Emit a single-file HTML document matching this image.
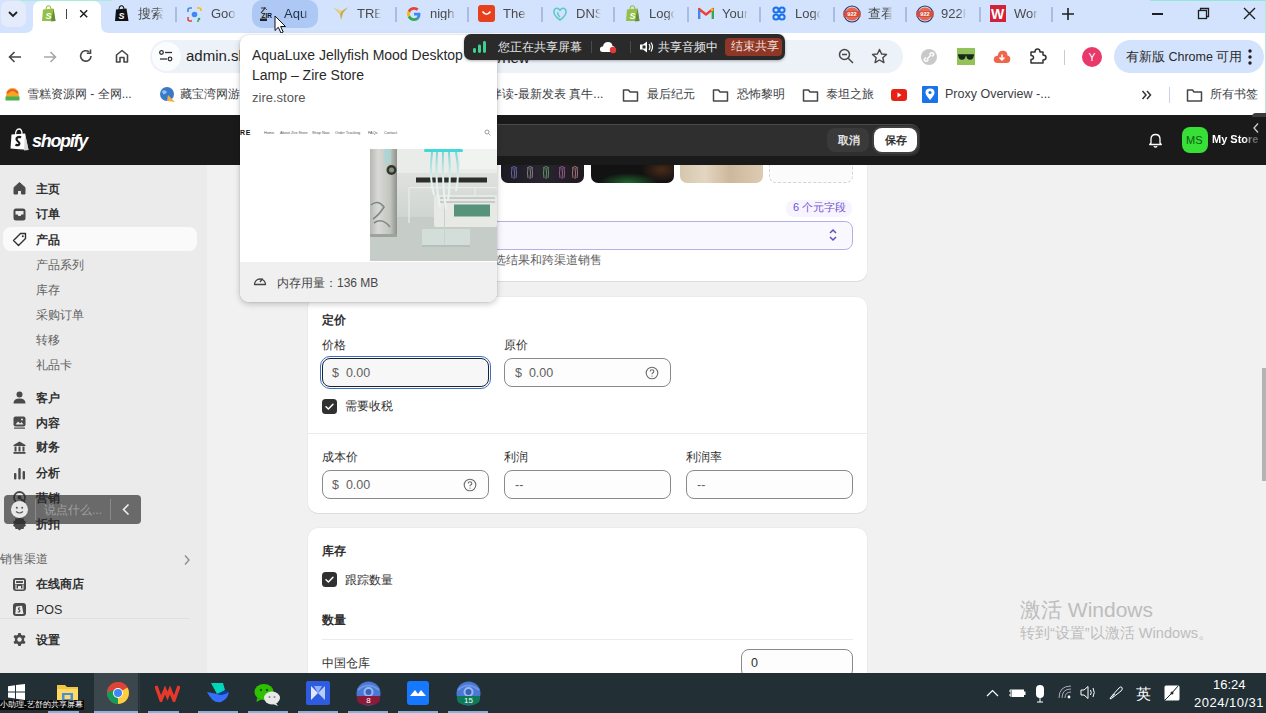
<!DOCTYPE html>
<html><head><meta charset="utf-8">
<style>
*{margin:0;padding:0;box-sizing:border-box}
html,body{width:1266px;height:713px;overflow:hidden;background:#f1f1f1;font-family:"Liberation Sans",sans-serif;position:relative}
.a{position:absolute}
.t{position:absolute;white-space:nowrap;line-height:1}
/* tab strip */
#tabs{left:0;top:0;width:1266px;height:33px;background:#d3e3fd}
#toolbar{left:0;top:33px;width:1266px;height:47px;background:#fff}
#bm{left:0;top:80px;width:1266px;height:35px;background:#fff}
#shhead{z-index:2;left:0;top:115px;width:1266px;height:50px;background:#1a1a1a}
#side{z-index:2;left:0;top:165px;width:207px;height:508px;background:#ebebeb}
#taskbar{z-index:4;left:0;top:673px;width:1266px;height:40px;background:#223036}
.tabtxt{font-size:13px;color:#4a4a4a}
.sep{width:1.5px;height:15px;background:#a9bde3;top:7px}
.card{background:#fff;border-radius:10px;box-shadow:0 1px 0 #dcdcdc, 0 0 0 0.5px #e6e6e6}
.nav{font-size:12px;font-weight:bold;color:#303030}
.sub{font-size:12px;color:#616161}
.lbl{font-size:12px;color:#303030}
.inp{border:1px solid #8a8a8a;border-radius:8px;background:#fdfdfd;height:29px}
.fade{overflow:hidden;-webkit-mask-image:linear-gradient(90deg,#000 70%,transparent);mask-image:linear-gradient(90deg,#000 70%,transparent)}
.inptxt{font-size:12.5px;color:#616161}
.bmt{font-size:12px;color:#3c4043}
</style></head><body>


<div id="tabs" class="a">
  
  <div class="a" style="left:20px;top:0;width:92px;height:1px;background:#a8ecdc"></div>
  <div class="a" style="left:1150px;top:0;width:116px;height:1px;background:#8fe8d8"></div>
  <!-- tab search -->
  <div class="a" style="left:1px;top:1px;width:25px;height:26px;border-radius:7px;background:#e4ecfb"></div>
  <svg class="a" style="left:5.5px;top:8px" width="14" height="12" viewBox="0 0 14 12"><path d="M3 4 L7 8 L11 4" stroke="#1f1f1f" stroke-width="1.8" fill="none"/></svg>
  <!-- active tab -->
  <svg class="a" style="left:25px;top:0px" width="84" height="33" viewBox="0 0 84 33"><path d="M0 33 Q8 33 8 25 L8 9 Q8 1 16 1 L68 1 Q76 1 76 9 L76 25 Q76 33 84 33 Z" fill="#fff"/></svg>
  <svg class="a" style="left:41px;top:5px" width="15" height="17" viewBox="0 0 15 17"><path d="M2 4.5 L12.5 3.5 L14.5 16 L1 16 Z" fill="#95bf47"/><path d="M12.5 3.5 L14.5 16 L10 16.5 Z" fill="#5e8e3e"/><path d="M5 5 Q5 0.8 7.5 0.8 Q10 0.8 10 5" stroke="#95bf47" stroke-width="1.1" fill="none"/><text x="4.5" y="14" font-size="9" font-weight="bold" fill="#fff" font-family="Liberation Sans" font-style="italic">S</text></svg>
  <div class="a" style="left:66px;top:9px;width:1.3px;height:10px;background:#444"></div>
  <svg class="a" style="left:79px;top:9px" width="10" height="10" viewBox="0 0 10 10"><path d="M1.2 1.2 L8.2 8.2 M8.2 1.2 L1.2 8.2" stroke="#1f1f1f" stroke-width="1.5"/></svg>
  <!-- tab 2 shopify black -->
  <svg class="a" style="left:114px;top:5px" width="15" height="17" viewBox="0 0 15 17"><path d="M2 4.5 L12.5 3.5 L14.5 16 L1 16 Z" fill="#111"/><path d="M5 5 Q5 0.8 7.5 0.8 Q10 0.8 10 5" stroke="#111" stroke-width="1.1" fill="none"/><text x="4.5" y="14" font-size="9" font-weight="bold" fill="#fff" font-family="Liberation Sans" font-style="italic">S</text></svg>
  <div class="t tabtxt fade" style="left:138px;top:7px;width:26px">搜索</div>
  <div class="a sep" style="left:175px"></div>
  <!-- google lens -->
  <svg class="a" style="left:187px;top:7px" width="15" height="15" viewBox="0 0 15 15"><path d="M1 5 V3 Q1 1 3 1 H5" stroke="#4285f4" stroke-width="1.6" fill="none"/><path d="M10 1 H12 Q14 1 14 3 V4" stroke="#fbbc04" stroke-width="1.6" fill="none"/><path d="M1 10 V12 Q1 14 3 14 H5" stroke="#ea4335" stroke-width="1.6" fill="none"/><path d="M10 14 H12" stroke="#34a853" stroke-width="1.6"/><circle cx="7.5" cy="7.5" r="2.8" fill="#4285f4"/><circle cx="12" cy="12" r="1.3" fill="#34a853"/></svg>
  <div class="t tabtxt fade" style="left:211px;top:7px;width:25px">Goo</div>
  <!-- hovered tab -->
  <div class="a" style="left:252px;top:0px;width:66px;height:28px;border-radius:10px;background:#adc8f4"></div>
  <svg class="a" style="left:259px;top:6px" width="18" height="16" viewBox="0 0 18 16"><path d="M2 2 L6 2 L2 7" stroke="#333" stroke-width="1.2" fill="none"/><path d="M5 1 L8 4" stroke="#555" stroke-width="1"/><text x="2.5" y="12" font-size="6.5" font-weight="bold" fill="#111" font-family="Liberation Sans">ZIR</text><rect x="1" y="12.5" width="7" height="2.5" fill="#222"/></svg>
  <div class="t tabtxt fade" style="left:284px;top:7px;width:27px;color:#23324a">Aqu</div>
  <svg class="a" style="left:274px;top:15px" width="13" height="19" viewBox="0 0 13 19"><path d="M1 1 L1 15.5 L4.3 12.3 L7 18 L9.2 17 L6.6 11.5 L11.5 11.5 Z" fill="#fff" stroke="#111" stroke-width="1"/></svg>
  <!-- TREI -->
  <svg class="a" style="left:333px;top:6px" width="16" height="15" viewBox="0 0 16 15"><path d="M1 2 L7 8 L8 14 L10 7 L15 1 L9 5 L7 6 Z" fill="#c8a84a"/><path d="M1 2 L7 8 L9 5" fill="#e8d27a"/></svg>
  <div class="t tabtxt fade" style="left:357px;top:7px;width:24px">TREI</div>
  <div class="a sep" style="left:395px"></div>
  <!-- G -->
  <svg class="a" style="left:407px;top:7px" width="14" height="14" viewBox="0 0 48 48"><path fill="#EA4335" d="M24 9.5c3.5 0 6.6 1.2 9.1 3.6l6.8-6.8C35.8 2.4 30.3 0 24 0 14.6 0 6.6 5.4 2.6 13.3l7.9 6.1C12.4 13.6 17.7 9.5 24 9.5z"/><path fill="#4285F4" d="M46.1 24.5c0-1.6-.1-3.1-.4-4.5H24v9h12.4c-.5 2.9-2.2 5.3-4.6 6.9l7.6 5.9c4.4-4.1 6.7-10.1 6.7-17.3z"/><path fill="#FBBC05" d="M10.5 28.6c-.5-1.4-.8-3-.8-4.6s.3-3.2.8-4.6l-7.9-6.1C.9 16.6 0 20.2 0 24s.9 7.4 2.6 10.7l7.9-6.1z"/><path fill="#34A853" d="M24 48c6.5 0 11.9-2.1 15.9-5.8l-7.6-5.9c-2.1 1.4-4.9 2.3-8.3 2.3-6.3 0-11.6-4.2-13.5-9.9l-7.9 6.1C6.6 42.6 14.6 48 24 48z"/></svg>
  <div class="t tabtxt fade" style="left:430px;top:7px;width:26px">nigh</div>
  <div class="a sep" style="left:467px"></div>
  <!-- red -->
  <div class="a" style="left:478px;top:5px;width:17px;height:17px;border-radius:3px;background:#e8401c"></div>
  <svg class="a" style="left:478px;top:5px" width="17" height="17" viewBox="0 0 17 17"><path d="M4.5 6.5 Q8.5 12 12.5 6.5" stroke="#fff" stroke-width="1.5" fill="none"/></svg>
  <div class="t tabtxt fade" style="left:503px;top:7px;width:24px">The</div>
  <div class="a sep" style="left:541px"></div>
  <!-- DNS -->
  <svg class="a" style="left:552px;top:6px" width="16" height="16" viewBox="0 0 16 16"><path d="M8 14 Q1 9 2 5 Q3 1.5 6 2.5 Q8 3.5 8 5 Q8 3.5 10 2.5 Q13 1.5 14 5 Q15 9 8 14 Z" stroke="#5cc8c8" stroke-width="1.6" fill="none"/><path d="M8 11 Q5 8 6 6" stroke="#5cc8c8" stroke-width="1.4" fill="none"/></svg>
  <div class="t tabtxt fade" style="left:576px;top:7px;width:25px">DNS</div>
  <div class="a sep" style="left:613px"></div>
  <!-- shopify green -->
  <svg class="a" style="left:625px;top:5px" width="15" height="17" viewBox="0 0 15 17"><path d="M2 4.5 L12.5 3.5 L14.5 16 L1 16 Z" fill="#95bf47"/><path d="M12.5 3.5 L14.5 16 L10 16.5 Z" fill="#5e8e3e"/><path d="M5 5 Q5 0.8 7.5 0.8 Q10 0.8 10 5" stroke="#95bf47" stroke-width="1.1" fill="none"/><text x="4.5" y="14" font-size="9" font-weight="bold" fill="#fff" font-family="Liberation Sans" font-style="italic">S</text></svg>
  <div class="t tabtxt fade" style="left:649px;top:7px;width:26px">Logo</div>
  <div class="a sep" style="left:687px"></div>
  <!-- gmail -->
  <svg class="a" style="left:698px;top:7px" width="16" height="13" viewBox="0 0 16 13"><path d="M1 12 V2 L8 7.5 L15 2 V12" stroke="#ea4335" stroke-width="2.4" fill="none" stroke-linejoin="round"/><path d="M1 12 V3" stroke="#4285f4" stroke-width="2.4"/><path d="M15 12 V3" stroke="#34a853" stroke-width="2.4"/><path d="M13 3.5 L15 2" stroke="#fbbc04" stroke-width="2.4"/></svg>
  <div class="t tabtxt fade" style="left:722px;top:7px;width:26px">Your</div>
  <div class="a sep" style="left:759px"></div>
  <!-- blue logo -->
  <svg class="a" style="left:772px;top:6px" width="14" height="15" viewBox="0 0 14 15"><circle cx="4" cy="4" r="2.6" stroke="#1a73e8" stroke-width="2" fill="none"/><circle cx="10" cy="4" r="2.6" stroke="#1a73e8" stroke-width="2" fill="none"/><circle cx="4" cy="11" r="2.6" stroke="#1a73e8" stroke-width="2" fill="none"/><circle cx="10" cy="11" r="2.6" stroke="#1a73e8" stroke-width="2" fill="none"/></svg>
  <div class="t tabtxt fade" style="left:795px;top:7px;width:26px">Logo</div>
  <div class="a sep" style="left:833px"></div>
  <!-- 922 -->
  <svg class="a" style="left:843px;top:5px" width="18" height="18" viewBox="0 0 18 18"><circle cx="9" cy="9" r="8.6" fill="#27336a"/><circle cx="9" cy="9" r="7.4" fill="#d8d8e8"/><circle cx="9" cy="9" r="6.6" fill="#e2684f"/><rect x="0.5" y="6" width="17" height="6" fill="#d84c3c"/><text x="9" y="11" font-size="5.6" font-weight="bold" fill="#fff" text-anchor="middle" font-family="Liberation Sans">922</text></svg>
  <div class="t tabtxt fade" style="left:868px;top:7px;width:25px">查看</div>
  <div class="a sep" style="left:905px"></div>
  <svg class="a" style="left:916px;top:5px" width="18" height="18" viewBox="0 0 18 18"><circle cx="9" cy="9" r="8.6" fill="#27336a"/><circle cx="9" cy="9" r="7.4" fill="#d8d8e8"/><circle cx="9" cy="9" r="6.6" fill="#e2684f"/><rect x="0.5" y="6" width="17" height="6" fill="#d84c3c"/><text x="9" y="11" font-size="5.6" font-weight="bold" fill="#fff" text-anchor="middle" font-family="Liberation Sans">922</text></svg>
  <div class="t tabtxt fade" style="left:941px;top:7px;width:25px">922F</div>
  <div class="a sep" style="left:979px"></div>
  <div class="a" style="left:990px;top:5px;width:16px;height:17px;background:#d4213a"></div>
  <div class="t" style="left:991px;top:7px;font-size:14px;font-weight:bold;color:#fff">W</div>
  <div class="t tabtxt fade" style="left:1014px;top:7px;width:24px">Wor</div>
  <div class="a sep" style="left:1051px"></div>
  <svg class="a" style="left:1061px;top:7px" width="14" height="14" viewBox="0 0 14 14"><path d="M7 1 V13 M1 7 H13" stroke="#1f1f1f" stroke-width="1.6"/></svg>
  <!-- window controls -->
  <div class="a" style="left:1152px;top:13px;width:11px;height:1.5px;background:#1f1f1f"></div>
  <svg class="a" style="left:1197px;top:7px" width="13" height="13" viewBox="0 0 13 13"><rect x="1.5" y="3.5" width="8" height="8" stroke="#1f1f1f" stroke-width="1.3" fill="none"/><path d="M3.5 3.5 V1.5 H11.5 V9.5 H9.5" stroke="#1f1f1f" stroke-width="1.3" fill="none"/></svg>
  <svg class="a" style="left:1243px;top:7px" width="13" height="13" viewBox="0 0 13 13"><path d="M1 1 L12 12 M12 1 L1 12" stroke="#1f1f1f" stroke-width="1.4"/></svg>
</div>


<div id="toolbar" class="a">
  <svg class="a" style="left:7px;top:16px" width="16" height="16" viewBox="0 0 16 16"><path d="M14 8 H2.5 M7.5 3 L2.5 8 L7.5 13" stroke="#474747" stroke-width="1.6" fill="none"/></svg>
  <svg class="a" style="left:42px;top:16px" width="16" height="16" viewBox="0 0 16 16"><path d="M2 8 H13.5 M8.5 3 L13.5 8 L8.5 13" stroke="#a8a8a8" stroke-width="1.6" fill="none"/></svg>
  <svg class="a" style="left:78px;top:15px" width="16" height="16" viewBox="0 0 16 16"><path d="M13 8 A5.2 5.2 0 1 1 11.2 4" stroke="#474747" stroke-width="1.6" fill="none"/><path d="M12.5 1.5 V5.2 H8.8" stroke="#474747" stroke-width="1.6" fill="none"/></svg>
  <svg class="a" style="left:114px;top:15px" width="16" height="16" viewBox="0 0 16 16"><path d="M2.5 14 V7 L8 2.5 L13.5 7 V14 H10 V9.5 H6 V14 Z" stroke="#474747" stroke-width="1.6" fill="none" stroke-linejoin="round"/></svg>
  <!-- omnibox -->
  <div class="a" style="left:150px;top:7px;width:753px;height:33px;border-radius:17px;background:#edf1f8"></div>
  <div class="a" style="left:152px;top:9px;width:29px;height:29px;border-radius:15px;background:#fbfcfe"></div>
  <svg class="a" style="left:158px;top:16px" width="16" height="14" viewBox="0 0 16 14"><circle cx="3.5" cy="3.5" r="1.8" stroke="#333" stroke-width="1.3" fill="none"/><path d="M7 3.5 H14" stroke="#333" stroke-width="1.3"/><circle cx="12" cy="10" r="1.8" stroke="#333" stroke-width="1.3" fill="none"/><path d="M2 10 H9" stroke="#333" stroke-width="1.3"/></svg>
  <div class="t" style="left:186px;top:15px;font-size:15px;color:#1f1f1f">admin.sh</div>
  <div class="t" style="left:498px;top:16.5px;font-size:15px;color:#1f1f1f">/new</div>
  <svg class="a" style="left:838px;top:15px" width="17" height="17" viewBox="0 0 17 17"><circle cx="6.5" cy="6.5" r="5" stroke="#474747" stroke-width="1.5" fill="none"/><path d="M10.2 10.2 L15 15 M4 6.5 H9" stroke="#474747" stroke-width="1.5"/></svg>
  <svg class="a" style="left:871px;top:15px" width="17" height="17" viewBox="0 0 17 17"><path d="M8.5 1.5 L10.6 6 L15.5 6.4 L11.8 9.7 L12.9 14.6 L8.5 12 L4.1 14.6 L5.2 9.7 L1.5 6.4 L6.4 6 Z" stroke="#474747" stroke-width="1.4" fill="none" stroke-linejoin="round"/></svg>
  <!-- extensions -->
  <div class="a" style="left:921px;top:16px;width:16px;height:16px;border-radius:8px;background:#c9c9c9"></div>
  <svg class="a" style="left:921px;top:16px" width="16" height="16" viewBox="0 0 16 16"><path d="M6 10 L10 6 M5 8.5 L3.8 9.7 Q2.5 11.5 4.3 12 Q5.5 12.8 6.8 11.2 L7.5 10.5 M11 7.5 L12.2 6.3 Q13.5 4.5 11.7 4 Q10.5 3.2 9.2 4.8 L8.5 5.5" stroke="#fff" stroke-width="1.5" fill="none"/></svg>
  <div class="a" style="left:957px;top:15px;width:18px;height:17px;background:#93c25a"></div>
  <svg class="a" style="left:957px;top:15px" width="18" height="17" viewBox="0 0 18 17"><path d="M1 7 H17 M2 7 Q2 11 5 11 Q8 11 8 7 M10 7 Q10 11 13 11 Q16 11 16 7" stroke="#1a2a1a" stroke-width="1.5" fill="#1a2a1a"/></svg>
  <svg class="a" style="left:993px;top:16px" width="18" height="15" viewBox="0 0 18 15"><path d="M4.5 14 Q0.5 14 0.8 10 Q1.2 6.5 4.5 7 Q5.5 1.5 10 1.8 Q14.5 2 14.5 6.5 Q17.5 7 17.3 10.5 Q17 14 13.5 14 Z" fill="#f0664a"/><path d="M9 5.5 V11 M6.5 8.5 L9 11 L11.5 8.5" stroke="#fff" stroke-width="1.5" fill="none"/></svg>
  <svg class="a" style="left:1029px;top:14px" width="18" height="18" viewBox="0 0 18 18"><path d="M2 5 H6 Q6 2 8.5 2 Q11 2 11 5 H14 V8 Q17 8 17 10.5 Q17 13 14 13 V16 H2 V12.5 Q4.5 12.5 4.5 10.5 Q4.5 8.5 2 8.5 Z" stroke="#333" stroke-width="1.5" fill="none" stroke-linejoin="round"/></svg>
  <div class="a" style="left:1064px;top:17px;width:1px;height:15px;background:#c8ccd2"></div>
  <div class="a" style="left:1082px;top:14px;width:20px;height:20px;border-radius:10px;background:#e8396a"></div>
  <div class="t" style="left:1088.5px;top:19px;font-size:10.5px;color:#fff">Y</div>
  <div class="a" style="left:1114px;top:7px;width:150px;height:33px;border-radius:17px;background:#d3e3fd"></div>
  <div class="t" style="left:1126px;top:17.5px;font-size:12.5px;color:#2a2a2a">有新版 Chrome 可用</div>
  <svg class="a" style="left:1247px;top:15px" width="6" height="18" viewBox="0 0 6 18"><circle cx="3" cy="3" r="1.7" fill="#1f1f1f"/><circle cx="3" cy="9" r="1.7" fill="#1f1f1f"/><circle cx="3" cy="15" r="1.7" fill="#1f1f1f"/></svg>
</div>


<div id="bm" class="a">
  <svg class="a" style="left:5px;top:7px" width="15" height="14" viewBox="0 0 15 14"><path d="M1 10 Q1 1 7.5 1 Q14 1 14 10 Z" fill="#f5a623"/><path d="M2 6 Q7.5 0 13 6" stroke="#e95b2c" stroke-width="2" fill="none"/><rect x="0.5" y="9.5" width="14" height="4" fill="#4caf50"/></svg>
  <div class="t bmt" style="left:27px;top:8px">雪糕资源网 - 全网...</div>
  <svg class="a" style="left:159px;top:6px" width="17" height="17" viewBox="0 0 17 17"><circle cx="8" cy="8" r="7" fill="#3a78c8"/><path d="M3 5 Q6 3 8 6 Q6 9 4 8" fill="#8fc3f0"/><path d="M9 9 L16 16 L8 15 Z" fill="#f0b040"/></svg>
  <div class="t bmt" style="left:180px;top:8px">藏宝湾网游...</div>
  <div class="t bmt" style="left:490px;top:8px">伴读-最新发表 真牛...</div>
  <svg class="a" style="left:622px;top:8px" width="17" height="15" viewBox="0 0 17 15"><path d="M1.5 2 H6.5 L8 4 H15.5 V13 H1.5 Z" stroke="#474747" stroke-width="1.5" fill="none" stroke-linejoin="round"/></svg>
  <div class="t bmt" style="left:647px;top:8px">最后纪元</div>
  <svg class="a" style="left:712px;top:8px" width="17" height="15" viewBox="0 0 17 15"><path d="M1.5 2 H6.5 L8 4 H15.5 V13 H1.5 Z" stroke="#474747" stroke-width="1.5" fill="none" stroke-linejoin="round"/></svg>
  <div class="t bmt" style="left:737px;top:8px">恐怖黎明</div>
  <svg class="a" style="left:802px;top:8px" width="17" height="15" viewBox="0 0 17 15"><path d="M1.5 2 H6.5 L8 4 H15.5 V13 H1.5 Z" stroke="#474747" stroke-width="1.5" fill="none" stroke-linejoin="round"/></svg>
  <div class="t bmt" style="left:826px;top:8px">泰坦之旅</div>
  <div class="a" style="left:891px;top:9px;width:16px;height:12px;border-radius:3px;background:#e62117"></div>
  <svg class="a" style="left:891px;top:9px" width="16" height="12" viewBox="0 0 16 12"><path d="M6.5 3.5 L10.5 6 L6.5 8.5 Z" fill="#fff"/></svg>
  <div class="a" style="left:922px;top:6px;width:16px;height:17px;background:#1a73e8;border-radius:1px"></div>
  <svg class="a" style="left:922px;top:6px" width="16" height="17" viewBox="0 0 16 17"><path d="M8 14 Q3.5 9 3.5 6.5 Q3.5 2.5 8 2.5 Q12.5 2.5 12.5 6.5 Q12.5 9 8 14 Z" fill="#fff"/><circle cx="8" cy="6.5" r="1.6" fill="#1a73e8"/></svg>
  <div class="t bmt" style="left:945px;top:8px;font-size:12.5px">Proxy Overview -...</div>
  <svg class="a" style="left:1141px;top:9px" width="11" height="12" viewBox="0 0 11 12"><path d="M1.5 2 L5 6 L1.5 10 M6 2 L9.5 6 L6 10" stroke="#333" stroke-width="1.5" fill="none"/></svg>
  <div class="a" style="left:1169px;top:7px;width:1px;height:16px;background:#c8d4e8"></div>
  <svg class="a" style="left:1186px;top:8px" width="17" height="15" viewBox="0 0 17 15"><path d="M1.5 2 H6.5 L8 4 H15.5 V13 H1.5 Z" stroke="#474747" stroke-width="1.5" fill="none" stroke-linejoin="round"/></svg>
  <div class="t bmt" style="left:1210px;top:8px">所有书签</div>
</div>


<div id="shhead" class="a">
  <svg class="a" style="left:10px;top:13px" width="20" height="23" viewBox="0 0 20 23"><path d="M1.5 6.5 L15 5.5 L18.5 22 L0.5 20.5 Z" fill="#fff"/><path d="M15 5.5 L18.5 22 L14 22.5 Z" fill="#d8d8d8"/><path d="M5.5 7 Q5.5 1 9 1 Q12 1 12 6" stroke="#fff" stroke-width="1.3" fill="none"/><path d="M11 9.5 Q9.5 8.5 7.8 9.2 Q6 10 6.8 12 Q7.8 13.5 9 14.5 Q10 16 8.5 17 Q7.2 17.6 5.5 16.5" stroke="#1a1a1a" stroke-width="2.2" fill="none"/></svg>
  <div class="t" style="left:32px;top:16.5px;font-size:18px;font-weight:bold;font-style:italic;color:#fff;letter-spacing:-1.3px">shopify</div>
  <!-- contextual save bar -->
  <div class="a" style="left:480px;top:9px;width:440px;height:32px;border-radius:9px;background:#2f2f2f;border-top:1px solid #4a4a4a"></div>
  <div class="a" style="left:827px;top:13px;width:42px;height:24px;border-radius:8px;background:#3a3a3a"></div>
  <div class="t" style="left:837.5px;top:19.5px;font-size:11px;font-weight:bold;color:#e3e3e3">取消</div>
  <div class="a" style="left:874px;top:13px;width:43px;height:24px;border-radius:8px;background:#fff;box-shadow:0 0 0 2px #3f3f3f"></div>
  <div class="t" style="left:884.5px;top:19.5px;font-size:11px;font-weight:bold;color:#303030">保存</div>
  <svg class="a" style="left:1148px;top:17px" width="15" height="16" viewBox="0 0 15 16"><path d="M3 11 V7 Q3 2.5 7.5 2.5 Q12 2.5 12 7 V11 L13.3 12.5 H1.7 Z" stroke="#fff" stroke-width="1.3" fill="none" stroke-linejoin="round"/><path d="M5.8 14.3 Q7.5 15.8 9.2 14.3" stroke="#fff" stroke-width="1.3" fill="none"/></svg>
  <div class="a" style="left:1182px;top:12px;width:26px;height:26px;border-radius:8px;background:#36e036"></div>
  <div class="t" style="left:1186px;top:20px;font-size:11px;color:#0f5a10">MS</div>
  <div class="t" style="left:1212px;top:19px;font-size:11px;font-weight:bold;color:#fff;-webkit-mask-image:linear-gradient(90deg,#000 72%,rgba(0,0,0,0.35) 85%)">My Store</div>
  <svg class="a" style="left:1252px;top:7px" width="8" height="12" viewBox="0 0 8 12"><path d="M6 1.5 L2 6 L6 10.5" stroke="#cfcfcf" stroke-width="1.3" fill="none"/></svg>
</div>

<div id="side" class="a">
<div class="a" style="left:3px;top:62px;width:194px;height:24px;border-radius:8px;background:#fafafa"></div>
<svg class="a" style="left:12px;top:16px" width="15" height="15" viewBox="0 0 15 15"><path d="M2 13 V6.5 L7.5 1.5 L13 6.5 V13 H9.5 V9.5 H5.5 V13 Z" fill="#4a4a4a" stroke="#4a4a4a" stroke-width="1" stroke-linejoin="round"/></svg><div class="t nav" style="left:36px;top:17.5px">主页</div>
<svg class="a" style="left:12px;top:41.5px" width="15" height="15" viewBox="0 0 15 15"><rect x="1.5" y="1.5" width="12" height="12" rx="2.5" fill="#4a4a4a"/><path d="M3.5 4 H11.5 V7.5 H9.5 L8.5 9 H6.5 L5.5 7.5 H3.5 Z" fill="#ebebeb"/></svg><div class="t nav" style="left:36px;top:43px">订单</div>
<svg class="a" style="left:12px;top:67px" width="15" height="15" viewBox="0 0 15 15"><path d="M8.5 1.5 H13.5 V6.5 L6.5 13.5 L1.5 8.5 Z" stroke="#303030" stroke-width="1.4" fill="none" stroke-linejoin="round"/><circle cx="10.8" cy="4.2" r="1" fill="#303030"/></svg><div class="t nav" style="left:36px;top:68.5px">产品</div>
<svg class="a" style="left:12px;top:225px" width="15" height="15" viewBox="0 0 15 15"><circle cx="7.5" cy="4.5" r="3" fill="#4a4a4a"/><path d="M1.5 13.5 Q1.5 8.5 7.5 8.5 Q13.5 8.5 13.5 13.5 Z" fill="#4a4a4a"/></svg><div class="t nav" style="left:36px;top:226.5px">客户</div>
<svg class="a" style="left:12px;top:250.1px" width="15" height="15" viewBox="0 0 15 15"><rect x="1.5" y="1.5" width="12" height="10" rx="2" fill="#4a4a4a"/><path d="M3.5 9.5 L6 6.5 L8 8.5 L9.5 7 L11.5 9.5 Z" fill="#ebebeb"/><circle cx="10" cy="4.5" r="1" fill="#ebebeb"/><rect x="2" y="12.5" width="11" height="1.2" fill="#4a4a4a"/></svg><div class="t nav" style="left:36px;top:251.6px">内容</div>
<svg class="a" style="left:12px;top:274.8px" width="15" height="15" viewBox="0 0 15 15"><path d="M1.5 5 L7.5 1.5 L13.5 5 V6 H1.5 Z" fill="#4a4a4a"/><rect x="2.5" y="6.5" width="2" height="5" fill="#4a4a4a"/><rect x="6.5" y="6.5" width="2" height="5" fill="#4a4a4a"/><rect x="10.5" y="6.5" width="2" height="5" fill="#4a4a4a"/><rect x="1.5" y="12" width="12" height="1.8" fill="#4a4a4a"/></svg><div class="t nav" style="left:36px;top:276.3px">财务</div>
<svg class="a" style="left:12px;top:300.5px" width="15" height="15" viewBox="0 0 15 15"><rect x="2" y="7" width="2.4" height="6.5" rx="1" fill="#4a4a4a"/><rect x="6.3" y="2" width="2.4" height="11.5" rx="1" fill="#4a4a4a"/><rect x="10.6" y="5" width="2.4" height="8.5" rx="1" fill="#4a4a4a"/></svg><div class="t nav" style="left:36px;top:302px">分析</div>
<svg class="a" style="left:12px;top:325.3px" width="15" height="15" viewBox="0 0 15 15"><circle cx="7.5" cy="7.5" r="5.5" stroke="#4a4a4a" stroke-width="1.8" fill="none"/><circle cx="7.5" cy="7.5" r="2" fill="#4a4a4a"/><path d="M9 9 L13 13" stroke="#4a4a4a" stroke-width="2"/></svg><div class="t nav" style="left:36px;top:326.8px">营销</div>
<svg class="a" style="left:12px;top:351.2px" width="15" height="15" viewBox="0 0 15 15"><path d="M7.5 1 L9.2 2.5 L11.5 2.3 L12 4.5 L14 5.8 L13 7.8 L14 9.8 L12 11 L11.5 13 L9.2 13 L7.5 14.5 L5.8 13 L3.5 13 L3 11 L1 9.8 L2 7.8 L1 5.8 L3 4.5 L3.5 2.3 L5.8 2.5 Z" fill="#4a4a4a"/></svg><div class="t nav" style="left:36px;top:352.7px">折扣</div>
<div class="t sub" style="left:36px;top:93.5px">产品系列</div>
<div class="t sub" style="left:36px;top:118.5px">库存</div>
<div class="t sub" style="left:36px;top:143.5px">采购订单</div>
<div class="t sub" style="left:36px;top:168.8px">转移</div>
<div class="t sub" style="left:36px;top:194px">礼品卡</div>
<div class="t sub" style="left:0px;top:388px">销售渠道</div>
<svg class="a" style="left:183px;top:389px" width="8" height="12" viewBox="0 0 8 12"><path d="M2 1.5 L6 6 L2 10.5" stroke="#8a8a8a" stroke-width="1.3" fill="none"/></svg>
<svg class="a" style="left:12px;top:411.5px" width="15" height="15" viewBox="0 0 15 15"><rect x="1" y="1" width="13" height="13" rx="3" fill="#4a4a4a"/><rect x="3.5" y="3.5" width="8" height="3" fill="none" stroke="#ebebeb" stroke-width="1.1"/><path d="M4 7.5 V12 H11 V7.5" stroke="#ebebeb" stroke-width="1.1" fill="none"/><rect x="6" y="9" width="3" height="3" fill="#ebebeb"/></svg><div class="t nav" style="left:36px;top:413px">在线商店</div>
<svg class="a" style="left:12px;top:437px" width="15" height="15" viewBox="0 0 15 15"><rect x="1" y="1" width="13" height="13" rx="3" fill="#4a4a4a"/><path d="M4 4.5 L10 3.8 L11.5 12 L3.3 12 Z" fill="#ebebeb"/><path d="M8.2 6 Q7 5.5 6.5 6.5 Q6.3 7.5 7.5 8 Q8.3 8.8 7.3 9.8 Q6.5 10.2 5.8 9.6" stroke="#4a4a4a" stroke-width="1.1" fill="none"/></svg><div class="t nav" style="left:36px;top:439px;font-weight:normal;font-size:12.5px">POS</div>
<svg class="a" style="left:12px;top:467px" width="15" height="15" viewBox="0 0 15 15"><path d="M6.3 1 H8.7 L9.1 2.8 L10.6 3.6 L12.3 2.9 L13.5 5 L12.1 6.3 V8.7 L13.5 10 L12.3 12.1 L10.6 11.4 L9.1 12.2 L8.7 14 H6.3 L5.9 12.2 L4.4 11.4 L2.7 12.1 L1.5 10 L2.9 8.7 V6.3 L1.5 5 L2.7 2.9 L4.4 3.6 L5.9 2.8 Z" fill="#4a4a4a"/><circle cx="7.5" cy="7.5" r="2.2" fill="#ebebeb"/></svg><div class="t nav" style="left:36px;top:468.5px">设置</div>
<div class="a" style="left:0px;top:453px;width:190px;height:1px;background:#e0e0e0"></div>
</div>


<!-- cards -->
<div class="a card" style="left:308px;top:150px;width:559px;height:131px"></div>
<div class="a" style="left:501px;top:150px;width:83px;height:33px;border-radius:7px;background:linear-gradient(90deg,#1c1a22,#2a2430 50%,#1e1a20)"></div>
<svg class="a" style="left:501px;top:165px" width="83" height="18" viewBox="0 0 83 18"><path d="M10 3 Q13 0 16 3 M11 3 Q10 8 11 13 M13 3 Q14 8 13 14 M15 3 Q16 8 15 13" stroke="#8d8ae0" stroke-width="0.8" fill="none" opacity="0.85"/><path d="M26 3 Q29 0 32 3 M27 3 Q26 8 27 13 M29 3 Q30 8 29 14 M31 3 Q32 8 31 13" stroke="#b0b0b0" stroke-width="0.8" fill="none" opacity="0.85"/><path d="M42 3 Q45 0 48 3 M43 3 Q42 8 43 13 M45 3 Q46 8 45 14 M47 3 Q48 8 47 13" stroke="#6fd07a" stroke-width="0.8" fill="none" opacity="0.85"/><path d="M58 3 Q61 0 64 3 M59 3 Q58 8 59 13 M61 3 Q62 8 61 14 M63 3 Q64 8 63 13" stroke="#d07ab8" stroke-width="0.8" fill="none" opacity="0.85"/><path d="M71 3 Q74 0 77 3 M72 3 Q71 8 72 13 M74 3 Q75 8 74 14 M76 3 Q77 8 76 13" stroke="#e0a0a0" stroke-width="0.8" fill="none" opacity="0.85"/></svg>
<div class="a" style="left:591px;top:150px;width:83px;height:33px;border-radius:7px;background:radial-gradient(ellipse 30px 10px at 45% 100%,#1f6a30 0,rgba(20,20,20,0) 100%),radial-gradient(ellipse 20px 12px at 85% 60%,#4a2a18 0,rgba(20,20,20,0) 100%),#121212"></div>
<div class="a" style="left:680px;top:150px;width:83px;height:33px;border-radius:7px;background:linear-gradient(90deg,#d6c6ac,#e3d6c2 30%,#cdb89c 60%,#dccbb3)"></div>
<div class="a" style="left:769px;top:150px;width:84px;height:33px;border-radius:7px;border:1px dashed #d4d4d4;background:#fbfbfb"></div>
<div class="a" style="left:786px;top:200px;width:66px;height:17px;border-radius:8px;background:#f7f4ff"></div>
<div class="t" style="left:793px;top:202px;font-size:11px;color:#6c54d0">6 个元字段</div>
<div class="a" style="left:420px;top:221px;width:433px;height:29px;border-radius:8px;border:1px solid #b6aee6;background:#f9f8ff"></div>
<svg class="a" style="left:827px;top:227px" width="12" height="16" viewBox="0 0 12 16"><path d="M3 6 L6 3 L9 6 M3 10 L6 13 L9 10" stroke="#5b4fc2" stroke-width="1.5" fill="none"/></svg>
<div class="t" style="left:458px;top:254px;font-size:12px;color:#616161">商店筛选结果和跨渠道销售</div>

<div class="a card" style="left:308px;top:297px;width:559px;height:216px"></div>
<div class="t" style="left:322px;top:314px;font-size:12px;font-weight:bold;color:#303030">定价</div>
<div class="t lbl" style="left:322px;top:339px">价格</div>
<div class="t lbl" style="left:504px;top:339px">原价</div>
<div class="a" style="left:320px;top:356px;width:171px;height:33px;border-radius:10px;border:1px solid #3a6fc4"></div>
<div class="a" style="left:322px;top:358px;width:167px;height:29px;border-radius:8px;border:1.5px solid #1d2233;background:#f7f7f7"></div>
<div class="t inptxt" style="left:332px;top:367px">$&nbsp; 0.00</div>
<div class="a inp" style="left:504px;top:358px;width:167px;height:29px"></div>
<div class="t inptxt" style="left:515px;top:367px">$&nbsp; 0.00</div>
<svg class="a" style="left:645px;top:365.5px" width="14" height="14" viewBox="0 0 14 14"><circle cx="7" cy="7" r="5.8" stroke="#6b6b6b" stroke-width="1.1" fill="none"/><path d="M5.2 5.6 Q5.2 3.8 7 3.8 Q8.8 3.8 8.8 5.4 Q8.8 6.4 7.6 7 Q7 7.3 7 8.3" stroke="#6b6b6b" stroke-width="1.1" fill="none"/><circle cx="7" cy="10.1" r="0.7" fill="#6b6b6b"/></svg>
<div class="a" style="left:322px;top:399px;width:15px;height:15px;border-radius:3.5px;background:#303030"></div><svg class="a" style="left:322px;top:399px" width="15" height="15" viewBox="0 0 15 15"><path d="M4 7.8 L6.4 10 L11 5.2" stroke="#fff" stroke-width="1.5" fill="none" stroke-linecap="round" stroke-linejoin="round"/></svg>
<div class="t lbl" style="left:345px;top:400px">需要收税</div>
<div class="a" style="left:308px;top:433px;width:559px;height:1px;background:#ebebeb"></div>
<div class="t lbl" style="left:322px;top:451px">成本价</div>
<div class="t lbl" style="left:504px;top:451px">利润</div>
<div class="t lbl" style="left:686px;top:451px">利润率</div>
<div class="a inp" style="left:322px;top:470px;width:167px;height:29px"></div>
<div class="t inptxt" style="left:332px;top:479px">$&nbsp; 0.00</div>
<svg class="a" style="left:462.5px;top:477.5px" width="14" height="14" viewBox="0 0 14 14"><circle cx="7" cy="7" r="5.8" stroke="#6b6b6b" stroke-width="1.1" fill="none"/><path d="M5.2 5.6 Q5.2 3.8 7 3.8 Q8.8 3.8 8.8 5.4 Q8.8 6.4 7.6 7 Q7 7.3 7 8.3" stroke="#6b6b6b" stroke-width="1.1" fill="none"/><circle cx="7" cy="10.1" r="0.7" fill="#6b6b6b"/></svg>
<div class="a inp" style="left:504px;top:470px;width:167px;height:29px"></div>
<div class="t inptxt" style="left:515px;top:479px">--</div>
<div class="a inp" style="left:686px;top:470px;width:167px;height:29px"></div>
<div class="t inptxt" style="left:697px;top:479px">--</div>

<div class="a card" style="left:308px;top:528px;width:559px;height:200px"></div>
<div class="t" style="left:322px;top:545px;font-size:12px;font-weight:bold;color:#303030">库存</div>
<div class="a" style="left:322px;top:572px;width:15px;height:15px;border-radius:3.5px;background:#303030"></div><svg class="a" style="left:322px;top:572px" width="15" height="15" viewBox="0 0 15 15"><path d="M4 7.8 L6.4 10 L11 5.2" stroke="#fff" stroke-width="1.5" fill="none" stroke-linecap="round" stroke-linejoin="round"/></svg>
<div class="t lbl" style="left:345px;top:574px">跟踪数量</div>
<div class="t" style="left:322px;top:614px;font-size:12px;font-weight:bold;color:#303030">数量</div>
<div class="a" style="left:322px;top:639px;width:531px;height:1px;background:#ebebeb"></div>
<div class="t lbl" style="left:322px;top:657px">中国仓库</div>
<div class="a inp" style="left:741px;top:649px;width:112px;height:29px"></div>
<div class="t inptxt" style="left:751px;top:657px;color:#303030">0</div>

<div class="a" style="left:1262px;top:368px;width:4px;height:113px;background:#b4b4b4"></div>
<!-- activate windows -->
<div class="t" style="left:1020px;top:599px;font-size:21px;color:#bdbdbd">激活 Windows</div>
<div class="t" style="left:1020px;top:625.5px;font-size:14.6px;color:#bdbdbd">转到“设置”以激活 Windows。</div>

<!-- tab hover card -->
<div class="a" style="z-index:3;left:240px;top:35px;width:257px;height:267px;border-radius:9px;background:#fff;box-shadow:0 2px 6px rgba(0,0,0,0.22), 0 0 0 1px rgba(0,0,0,0.04);overflow:hidden">
  <div class="t" style="left:12px;top:10px;font-size:14px;color:#2a2a2a;line-height:20px">AquaLuxe Jellyfish Mood Desktop<br>Lamp – Zire Store</div>
  <div class="t" style="left:12px;top:56px;font-size:13px;color:#555">zire.store</div>
  <div class="a" style="left:0;top:80px;width:257px;height:147px;background:#fff">
    <div class="t" style="left:0px;top:14px;font-size:7px;font-weight:bold;color:#111;letter-spacing:0.6px">RE</div>
    <div class="t" style="left:24px;top:16.5px;font-size:3.8px;color:#555">Home</div><div class="t" style="left:40px;top:16.5px;font-size:3.8px;color:#555">About Zire Store</div><div class="t" style="left:72px;top:16.5px;font-size:3.8px;color:#555">Shop Now</div><div class="t" style="left:95px;top:16.5px;font-size:3.8px;color:#555">Order Tracking</div><div class="t" style="left:128px;top:16.5px;font-size:3.8px;color:#555">FAQs</div><div class="t" style="left:144px;top:16.5px;font-size:3.8px;color:#555">Contact</div>
    <svg class="a" style="left:244px;top:14px" width="7" height="7" viewBox="0 0 7 7"><circle cx="3" cy="3" r="2" stroke="#777" stroke-width="0.7" fill="none"/><path d="M4.5 4.5 L6.5 6.5" stroke="#777" stroke-width="0.7"/></svg>
    <svg class="a" style="left:129.5px;top:34px;filter:blur(0.45px)" width="127" height="112" viewBox="0 0 127 112">
      <defs>
        <linearGradient id="bg1" x1="0" y1="0" x2="0" y2="1"><stop offset="0" stop-color="#e4e7e3"/><stop offset="0.3" stop-color="#dcdfdb"/><stop offset="0.6" stop-color="#cfd5d1"/><stop offset="1" stop-color="#bfc7c3"/></linearGradient>
        <linearGradient id="cup" x1="0" y1="0" x2="1" y2="0"><stop offset="0" stop-color="#b5b8b2"/><stop offset="0.3" stop-color="#d9dad5"/><stop offset="0.75" stop-color="#c2c4be"/><stop offset="1" stop-color="#8e918c"/></linearGradient>
        <linearGradient id="tent" x1="0" y1="0" x2="0" y2="1"><stop offset="0" stop-color="#7ad6d6"/><stop offset="0.5" stop-color="#e6f2f0"/><stop offset="1" stop-color="#eef4f2"/></linearGradient>
      </defs>
      <rect width="127" height="112" fill="url(#bg1)"/>
      <rect x="27" y="0" width="100" height="24" fill="#e9ece8"/>
      <rect x="90" y="0" width="37" height="20" fill="#f1f3f0"/>
      <rect x="0" y="68" width="127" height="44" fill="#c6cdc9"/>
      <rect x="0" y="0" width="27" height="87" fill="url(#cup)"/>
      <rect x="14" y="0" width="7" height="14" fill="#9fdcdc" opacity="0.6"/>
      <circle cx="21.5" cy="21" r="5" fill="#33382f"/>
      <circle cx="21.5" cy="21" r="2.5" fill="#8a8f88"/>
      <path d="M1 56 Q8 50 14 58 Q9 66 3 70 M4 74 Q12 68 20 78" stroke="#7f8984" stroke-width="1.6" fill="none"/>
      <rect x="0" y="85" width="27" height="3" fill="#9ea29d"/>
      <rect x="46" y="28.5" width="71" height="5" fill="#2c2e2b"/>
      <path d="M39 38.7 H127 M39 38.7 V74 M105 38.7 V72" stroke="#e8ecea" stroke-width="1.3" fill="none"/>
      <rect x="64" y="46" width="63" height="32" rx="2" fill="#e6e9e4"/>
      <path d="M70 49 H125 M70 53 H125" stroke="#a9ada8" stroke-width="1.2"/>
      <rect x="84" y="55.5" width="36" height="12" fill="#56937a"/>
      <rect x="52" y="80" width="48" height="18" fill="#d3ddd9"/>
      <rect x="52" y="96" width="48" height="2" fill="#b6c0bc"/>
      <path d="M74.5 38 V96" stroke="#c8d3cf" stroke-width="1"/>
      <rect x="54" y="0" width="39" height="3" rx="1.5" fill="#40d8d8"/>
      <path d="M62 3 Q59 30 64 46 M67 3 Q65 35 70 58 M73 3 Q72 35 76 60 M79 3 Q81 32 78 52 M86 3 Q90 25 86 42" stroke="url(#tent)" stroke-width="2" fill="none"/>
    </svg>
  </div>
  <div class="a" style="left:0;top:227px;width:257px;height:40px;background:#f0f0f0">
    <svg class="a" style="left:13px;top:12px" width="14" height="12" viewBox="0 0 14 12"><path d="M1.5 10.5 A5.5 5.5 0 1 1 12.5 10.5 Z" stroke="#444" stroke-width="1.3" fill="none" stroke-linejoin="round"/><path d="M7 8 L9.5 4.5" stroke="#444" stroke-width="1.3"/></svg>
    <div class="t" style="left:37px;top:15px;font-size:12px;color:#474747">内存用量：136 MB</div>
  </div>
</div>
<!-- screen share bar -->
<div class="a" style="z-index:3;left:464px;top:34px;width:321px;height:26px;border-radius:7px;background:#2a2a2a;box-shadow:0 1px 3px rgba(0,0,0,0.3)">
  <svg class="a" style="left:8px;top:6px" width="16" height="14" viewBox="0 0 16 14"><rect x="1" y="8" width="3" height="5" rx="1.4" fill="#3fcf8e"/><rect x="6" y="4.5" width="3" height="8.5" rx="1.4" fill="#3fcf8e"/><rect x="11" y="1" width="3" height="12" rx="1.4" fill="#3fcf8e"/></svg>
  <div class="t" style="left:34px;top:7px;font-size:12px;color:#e8e8e8">您正在共享屏幕</div>
  <div class="a" style="left:127px;top:7px;width:1px;height:12px;background:#4a4a4a"></div>
  <svg class="a" style="left:135px;top:6px" width="20" height="14" viewBox="0 0 20 14"><path d="M4 12 Q0.5 12 1 8.5 Q1.5 6 4 6.5 Q4.5 2 9 2 Q13 2 13.5 6 Q16 6 16 9 Q16 12 13 12 Z" fill="#fff"/><circle cx="14" cy="10" r="3.2" fill="#e53935"/></svg>
  <div class="a" style="left:166px;top:7px;width:1px;height:12px;background:#4a4a4a"></div>
  <svg class="a" style="left:174px;top:6px" width="16" height="14" viewBox="0 0 16 14"><path d="M2 4.5 H5 L9 1.5 V12.5 L5 9.5 H2 Z" fill="#fff"/><path d="M11 4 Q13 7 11 10 M13 2.5 Q16 7 13 11.5" stroke="#fff" stroke-width="1.2" fill="none"/><rect x="4.5" y="5.5" width="3" height="3" fill="#2a2a2a"/></svg>
  <div class="t" style="left:194px;top:7px;font-size:12px;color:#e8e8e8">共享音频中</div>
  <div class="a" style="left:261px;top:4px;width:57px;height:18px;border-radius:4px;background:#8f3626"></div>
  <div class="t" style="left:267px;top:7px;font-size:11.5px;color:#f0e0dc">结束共享</div>
</div>

<div id="taskbar" class="a">
  <svg class="a" style="left:8px;top:11px" width="17" height="16" viewBox="0 0 17 16"><path d="M0 2.3 L7 1.3 V7.4 H0 Z M8 1.1 L17 0 V7.4 H8 Z M0 8.4 H7 V14.5 L0 13.6 Z M8 8.4 H17 V16 L8 14.8 Z" fill="#fff"/></svg>
  <svg class="a" style="left:56px;top:10px" width="23" height="22" viewBox="0 0 23 22"><path d="M1 2 H9 L11 4 H22 V21 H1 Z" fill="#f4c542"/><rect x="1" y="6" width="21" height="15" fill="#ffd966"/><rect x="6" y="10" width="11" height="8" fill="#4a8fd4"/><rect x="8.5" y="12" width="6" height="4" fill="#ffd966"/></svg>
  <div class="a" style="left:94px;top:0;width:44px;height:40px;background:#3b474d"></div>
  <svg class="a" style="left:106px;top:7.5px" width="24" height="24" viewBox="0 0 24 24"><circle cx="12" cy="12" r="11" fill="#db4437"/><path d="M12 12 L2.5 17.5 A11 11 0 0 1 2.47 6.5 Z" fill="#0f9d58"/><path d="M12 12 L2.5 17.5 A11 11 0 0 0 21.5 17.5 Z" fill="#0f9d58"/><path d="M12 12 L21.5 6.5 A11 11 0 0 1 12 23 Z" fill="#ffcd40"/><path d="M1 12 A11 11 0 0 1 21.5 6.5 L12 6.5 Z" fill="#db4437"/><circle cx="12" cy="12" r="5" fill="#fff"/><circle cx="12" cy="12" r="4" fill="#4285f4"/></svg>
  <div class="a" style="left:139px;top:0;width:1px;height:40px;background:#2f3a40"></div>
  <svg class="a" style="left:155px;top:11px" width="25" height="18" viewBox="0 0 25 18"><path d="M1 2 L6 16 L10 6 L12.5 12 L15 6 L19 16 L24 2" stroke="#e8382a" stroke-width="3.4" fill="none" stroke-linejoin="miter"/></svg>
  <svg class="a" style="left:205px;top:9px" width="25" height="23" viewBox="0 0 25 23"><path d="M2 10 Q8 22 16 20 Q23 17 24 10 Q18 14 12 12 Z" fill="#3370ff"/><path d="M6 1 H18 L20 8 Q16 12 12 12 Z" fill="#00d6b9"/><path d="M12 12 Q18 14 24 10 L20 8 Z" fill="#133c9a"/></svg>
  <svg class="a" style="left:254px;top:10px" width="27" height="24" viewBox="0 0 27 24"><ellipse cx="10" cy="9" rx="9.5" ry="8" fill="#2dc100"/><path d="M3 15 L2.5 19 L7 16.5 Z" fill="#2dc100"/><ellipse cx="18" cy="15" rx="8" ry="6.5" fill="#e8e8e8"/><path d="M22 20 L24 23 L19 21 Z" fill="#e8e8e8"/><circle cx="7" cy="7" r="1.2" fill="#1a5a10"/><circle cx="13" cy="7" r="1.2" fill="#1a5a10"/><circle cx="15.5" cy="14" r="1" fill="#888"/><circle cx="20.5" cy="14" r="1" fill="#888"/></svg>
  <div class="a" style="left:306px;top:8px;width:24px;height:24px;border-radius:2px;background:#2f5be0"></div>
  <svg class="a" style="left:306px;top:8px" width="24" height="24" viewBox="0 0 24 24"><path d="M5 5 L12 12 L5 19 Z" fill="#fff" opacity="0.85"/><path d="M19 5 L12 12 L19 19 Z" fill="#cfe0ff" opacity="0.85"/><path d="M12 12 L8 5 H16 Z" fill="#8fb0ff"/></svg>
  <svg class="a" style="left:356px;top:7.5px" width="25" height="25" viewBox="0 0 25 25"><circle cx="12.5" cy="12.5" r="12" fill="#4a78d6"/><circle cx="12.5" cy="11" r="4" stroke="#9ab8f0" stroke-width="2" fill="#3a62b8"/><path d="M2 9 Q12 0 23 9" stroke="#6f96e6" stroke-width="2" fill="none"/><path d="M1 15 H24 V18 Q24 24 12.5 24 Q1 24 1 18 Z" fill="#8b1a3a"/><text x="12.5" y="22" font-size="8" fill="#fff" text-anchor="middle" font-family="Liberation Sans">8</text></svg>
  <div class="a" style="left:407px;top:8px;width:22px;height:24px;border-radius:3px;background:#1677ff"></div>
  <svg class="a" style="left:407px;top:8px" width="22" height="24" viewBox="0 0 22 24"><path d="M3 15 L8 9 L11 13 L14 9 L19 15 Z" fill="#fff"/></svg>
  <svg class="a" style="left:456px;top:7.5px" width="25" height="25" viewBox="0 0 25 25"><circle cx="12.5" cy="12.5" r="12" fill="#4a78d6"/><circle cx="12.5" cy="11" r="4" stroke="#9ab8f0" stroke-width="2" fill="#3a62b8"/><path d="M2 9 Q12 0 23 9" stroke="#6f96e6" stroke-width="2" fill="none"/><path d="M1 15 H24 V18 Q24 24 12.5 24 Q1 24 1 18 Z" fill="#0f7a5a"/><text x="12.5" y="22" font-size="8" fill="#fff" text-anchor="middle" font-family="Liberation Sans">15</text></svg>
  <!-- indicators -->
  <div class="a" style="left:48px;top:38px;width:31px;height:2px;background:#86b0d8"></div>
  <div class="a" style="left:94px;top:38px;width:44px;height:2px;background:#86b4e0"></div>
  <div class="a" style="left:148px;top:38px;width:31px;height:2px;background:#86b0d8"></div>
  <div class="a" style="left:198px;top:38px;width:40px;height:2px;background:#86b0d8"></div>
  <div class="a" style="left:248px;top:38px;width:40px;height:2px;background:#86b0d8"></div>
  <div class="a" style="left:298px;top:38px;width:40px;height:2px;background:#86b0d8"></div>
  <div class="a" style="left:348px;top:38px;width:40px;height:2px;background:#86b0d8"></div>
  <div class="a" style="left:398px;top:38px;width:40px;height:2px;background:#86b0d8"></div>
  <div class="a" style="left:448px;top:38px;width:40px;height:2px;background:#86b0d8"></div>
  <!-- overlay label -->
  <div class="a" style="left:0;top:27px;width:84px;height:10px;background:#0a0a0a"></div>
  <div class="t" style="left:0;top:27px;font-size:8px;color:#fff;line-height:10px">小助理-艺舒的共享屏幕</div>
  <!-- tray -->
  <svg class="a" style="left:986px;top:16px" width="13" height="8" viewBox="0 0 13 8"><path d="M1 7 L6.5 1.5 L12 7" stroke="#fff" stroke-width="1.2" fill="none"/></svg>
  <svg class="a" style="left:1008px;top:14px" width="18" height="12" viewBox="0 0 18 12"><path d="M1 4 H3 M1 8 H3 M3 2 V10" stroke="#fff" stroke-width="1"/><rect x="4" y="2.5" width="12" height="7.5" fill="#fff"/><rect x="16" y="4.5" width="1.5" height="3.5" fill="#fff"/></svg>
  <svg class="a" style="left:1034px;top:11px" width="12" height="19" viewBox="0 0 12 19"><rect x="2" y="1" width="8" height="13" rx="4" fill="#fff"/><path d="M6 14 V18 M3 18 H9" stroke="#fff" stroke-width="1"/></svg>
  <svg class="a" style="left:1058px;top:12px" width="14" height="14" viewBox="0 0 14 14"><path d="M1 13 Q1 1 13 1 M4 13 Q4 4 13 4 M7 13 Q7 7 13 7" stroke="#aab" stroke-width="1" fill="none"/><circle cx="11" cy="12" r="1.4" fill="#fff"/></svg>
  <svg class="a" style="left:1080px;top:12px" width="17" height="15" viewBox="0 0 17 15"><path d="M1 5 H4 L8 1.5 V13.5 L4 10 H1 Z" stroke="#fff" stroke-width="1" fill="none"/><path d="M10.5 5 Q12 7.5 10.5 10 M13 3 Q15.5 7.5 13 12" stroke="#fff" stroke-width="1" fill="none"/></svg>
  <svg class="a" style="left:1109px;top:12px" width="15" height="15" viewBox="0 0 15 15"><path d="M3 13 L1 14 L2 12 L10 3 Q12 1 13 2.5 Q14 4 12 6 Z" stroke="#fff" stroke-width="1" fill="none"/><path d="M6 9 Q3 9 4 12" stroke="#fff" stroke-width="1" fill="none"/></svg>
  <div class="t" style="left:1136px;top:13px;font-size:15px;color:#fff">英</div>
  <svg class="a" style="left:1164px;top:12px" width="16" height="16" viewBox="0 0 16 16"><rect x="0.5" y="0.5" width="15" height="15" rx="1.5" fill="#fff"/><path d="M1 15 L8 8 L14 1" stroke="#1e2a30" stroke-width="1"/><circle cx="8" cy="8" r="1.5" fill="#1e2a30"/></svg>
  <div class="t" style="left:1213px;top:5px;font-size:13px;color:#fff">16:24</div>
  <div class="t" style="left:1194px;top:23px;font-size:13px;letter-spacing:0.5px;color:#fff">2024/10/31</div>
</div>
<div class="a" style="z-index:6;left:1265px;top:0;width:1px;height:115px;background:#b0eadc"></div>
<div class="a" style="z-index:6;left:1252px;top:113px;width:14px;height:4px;border-radius:5px 0 0 0;background:#3c3c3c"></div>
<!-- chat overlay -->
<div class="a" style="z-index:5;left:4px;top:495px;width:137px;height:29px;border-radius:4px;background:rgba(40,40,40,0.66)">
  <svg class="a" style="left:6px;top:5px" width="19" height="19" viewBox="0 0 19 19"><circle cx="9.5" cy="9.5" r="8.5" fill="#e8e8e8"/><circle cx="6.8" cy="7.8" r="1" fill="#555"/><circle cx="12.2" cy="7.8" r="1" fill="#555"/><path d="M6 11.5 Q9.5 14.5 13 11.5" stroke="#555" stroke-width="1.1" fill="none"/></svg>
  <div class="a" style="left:31px;top:4px;width:1px;height:21px;background:#8a8a8a"></div>
  <div class="t" style="left:40px;top:9px;font-size:12px;color:#a0a0a0">说点什么...</div>
  <div class="a" style="left:106px;top:4px;width:1px;height:21px;background:#8a8a8a"></div>
  <svg class="a" style="left:117px;top:8px" width="10" height="13" viewBox="0 0 10 13"><path d="M7.5 1.5 L2.5 6.5 L7.5 11.5" stroke="#f0f0f0" stroke-width="1.6" fill="none"/></svg>
</div>

</body></html>
